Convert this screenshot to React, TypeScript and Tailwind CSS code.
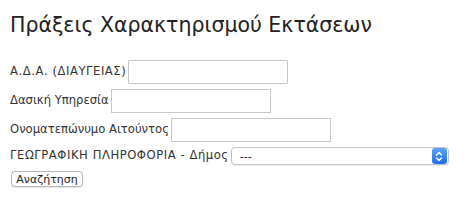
import React from "react";

export default function App() {
  const label = "text-[11.6px] text-[#333] leading-none";
  const labelUp = "text-[11.6px] text-[#333] leading-none tracking-[0.55px]";
  const input = "h-[24px] w-[160px] border border-[#c8c8c8] bg-white";
  return (
    <div className="w-[471px] h-[208px] bg-white pl-[10px] pt-[12px]" style={{ fontFamily: "'DejaVu Sans', Verdana, sans-serif" }}>
      <h1 className="text-[20.5px] leading-[26px] text-[#222] mb-[22px]" style={{ fontFamily: "'DejaVu Sans', sans-serif" }}>
        Πράξεις Χαρακτηρισμού Εκτάσεων
      </h1>
      <div className="flex flex-col gap-[5px]">
        <div className="flex items-center gap-[2px]">
          <span className={labelUp}>Α.Δ.Α. (ΔΙΑΥΓΕΙΑΣ)</span>
          <div className={input} />
        </div>
        <div className="flex items-center gap-[2px]">
          <span className={label}>Δασική Υπηρεσία</span>
          <div className={input} />
        </div>
        <div className="flex items-center gap-[2px]">
          <span className={label}>Ονοματεπώνυμο Αιτούντος</span>
          <div className={input} />
        </div>
        <div className="flex items-center gap-[2px] h-[18px]">
          <span className={labelUp}>ΓΕΩΓΡΑΦΙΚΗ ΠΛΗΡΟΦΟΡΙΑ - Δήμος</span>
          <div className="h-[18px] w-[218px] border border-[#c4c4c4] rounded-[4px] bg-white flex items-center justify-between pl-[8px] pr-[1px] shadow-[0_1px_1px_rgba(0,0,0,0.08)]">
            <span className="text-[11px] text-[#222] leading-none">---</span>
            <div className="h-[16px] w-[15px] rounded-[3px] bg-gradient-to-b from-[#5aa2f7] to-[#1b6ff0] flex items-center justify-center">
              <svg width="8" height="11" viewBox="0 0 8 11" fill="none" stroke="white" strokeWidth="1.4" strokeLinecap="round" strokeLinejoin="round">
                <path d="M1.5 4 L4 1.5 L6.5 4" />
                <path d="M1.5 7 L4 9.5 L6.5 7" />
              </svg>
            </div>
          </div>
        </div>
        <div className="mt-[1px] flex">
          <button className="h-[16px] w-[72px] ml-[1px] border border-[#b4b4b4] rounded-[4px] bg-white text-[11px] text-[#222] leading-none shadow-[0_1px_1px_rgba(0,0,0,0.1)]">
            Αναζήτηση
          </button>
        </div>
      </div>
    </div>
  );
}
